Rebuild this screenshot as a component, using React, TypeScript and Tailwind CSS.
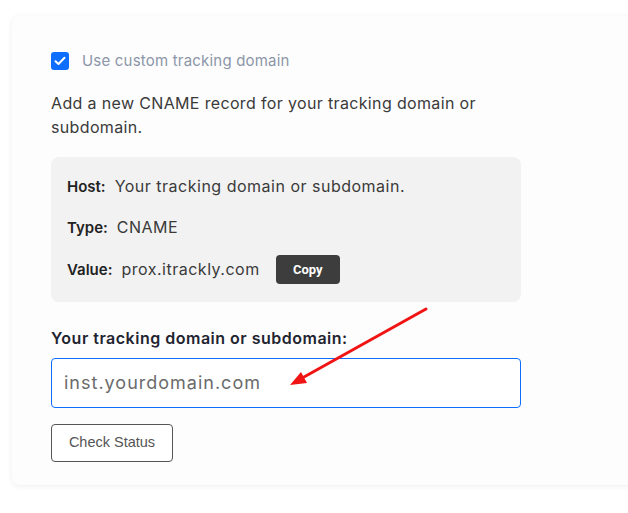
import { useState } from "react";

export default function App() {
  const [checked, setChecked] = useState(true);
  const [domain, setDomain] = useState("");

  return (
    <div className="min-h-[513px] bg-white overflow-hidden pl-3 pt-4 pb-6 font-['Inter',sans-serif]">
      <div className="relative w-[680px] bg-[#fdfdfd] rounded-lg shadow-[0_1px_6px_rgba(0,0,0,0.07)] pl-[39px] pt-[34px] pb-[23px]">
        {/* Checkbox */}
        <label className="flex items-center gap-[13px] cursor-pointer">
          <span
            onClick={() => setChecked(c => !c)}
            className={`w-[18px] h-[18px] rounded-[3px] flex items-center justify-center ${checked ? "bg-[#0d6efd]" : "border border-gray-400 bg-white"}`}
          >
            {checked && (
              <svg width="12" height="10" viewBox="0 0 12 10" fill="none">
                <path d="M1.5 5.2 L4.5 8 L10.5 1.8" stroke="white" strokeWidth="2" strokeLinecap="round" strokeLinejoin="round" />
              </svg>
            )}
          </span>
          <span className="text-[15px] tracking-[0.2px] text-[#8c96a8]">Use custom tracking domain</span>
        </label>

        <p className="mt-[18px] w-[450px] text-[16px] leading-[24px] tracking-[0.35px] text-[#3a3a3a]">
          Add a new CNAME record for your tracking domain or subdomain.
        </p>

        {/* DNS record */}
        <div className="mt-[18px] w-[470px] h-[145px] bg-[#f2f2f2] rounded-lg pl-4 pt-[17px] text-[16px] tracking-[0.5px] text-[#3a3a3a]">
          <div className="h-[24px] flex items-baseline">
            <span className="font-semibold text-[15px] tracking-normal text-[#222]">Host:</span>
            <span className="ml-[9px]">Your tracking domain or subdomain.</span>
          </div>
          <div className="mt-[17px] h-[24px] flex items-baseline">
            <span className="font-semibold text-[15px] tracking-normal text-[#222]">Type:</span>
            <span className="ml-[9px]">CNAME</span>
          </div>
          <div className="mt-[19px] h-[24px] flex items-center">
            <div className="flex items-baseline">
              <span className="font-semibold text-[15px] tracking-normal text-[#222]">Value:</span>
              <span className="ml-[9px]">prox.itrackly.com</span>
            </div>
            <button className="ml-[16px] w-[64px] h-[29px] rounded bg-[#3d3d3d] text-white text-[13px] tracking-normal font-bold font-['Roboto',sans-serif]">
              Copy
            </button>
          </div>
        </div>

        <div className="mt-[24px] text-[16px] tracking-[0.5px] font-semibold text-[#1f2430]">Your tracking domain or subdomain:</div>

        <input
          value={domain}
          onChange={e => setDomain(e.target.value)}
          placeholder="inst.yourdomain.com"
          className="mt-[8px] block w-[470px] h-[50px] rounded border border-[#0d6efd] px-[12px] text-[18px] tracking-[1px] text-[#333] placeholder:text-[#6b6b6b] outline-none bg-white"
        />

        <button className="mt-[16px] w-[122px] h-[38px] rounded border border-[#555] text-[14.5px] text-[#555] font-['Liberation_Sans',sans-serif] bg-white">
          Check Status
        </button>

        {/* annotation arrow */}
        <svg className="absolute left-[270px] top-[285px] pointer-events-none" width="170" height="95" viewBox="0 0 170 95">
          <line x1="144" y1="8" x2="22" y2="76" stroke="#f01414" strokeWidth="3" strokeLinecap="round" />
          <polygon points="8,84 25,82 19,71" fill="#f01414" />
        </svg>
      </div>
    </div>
  );
}
